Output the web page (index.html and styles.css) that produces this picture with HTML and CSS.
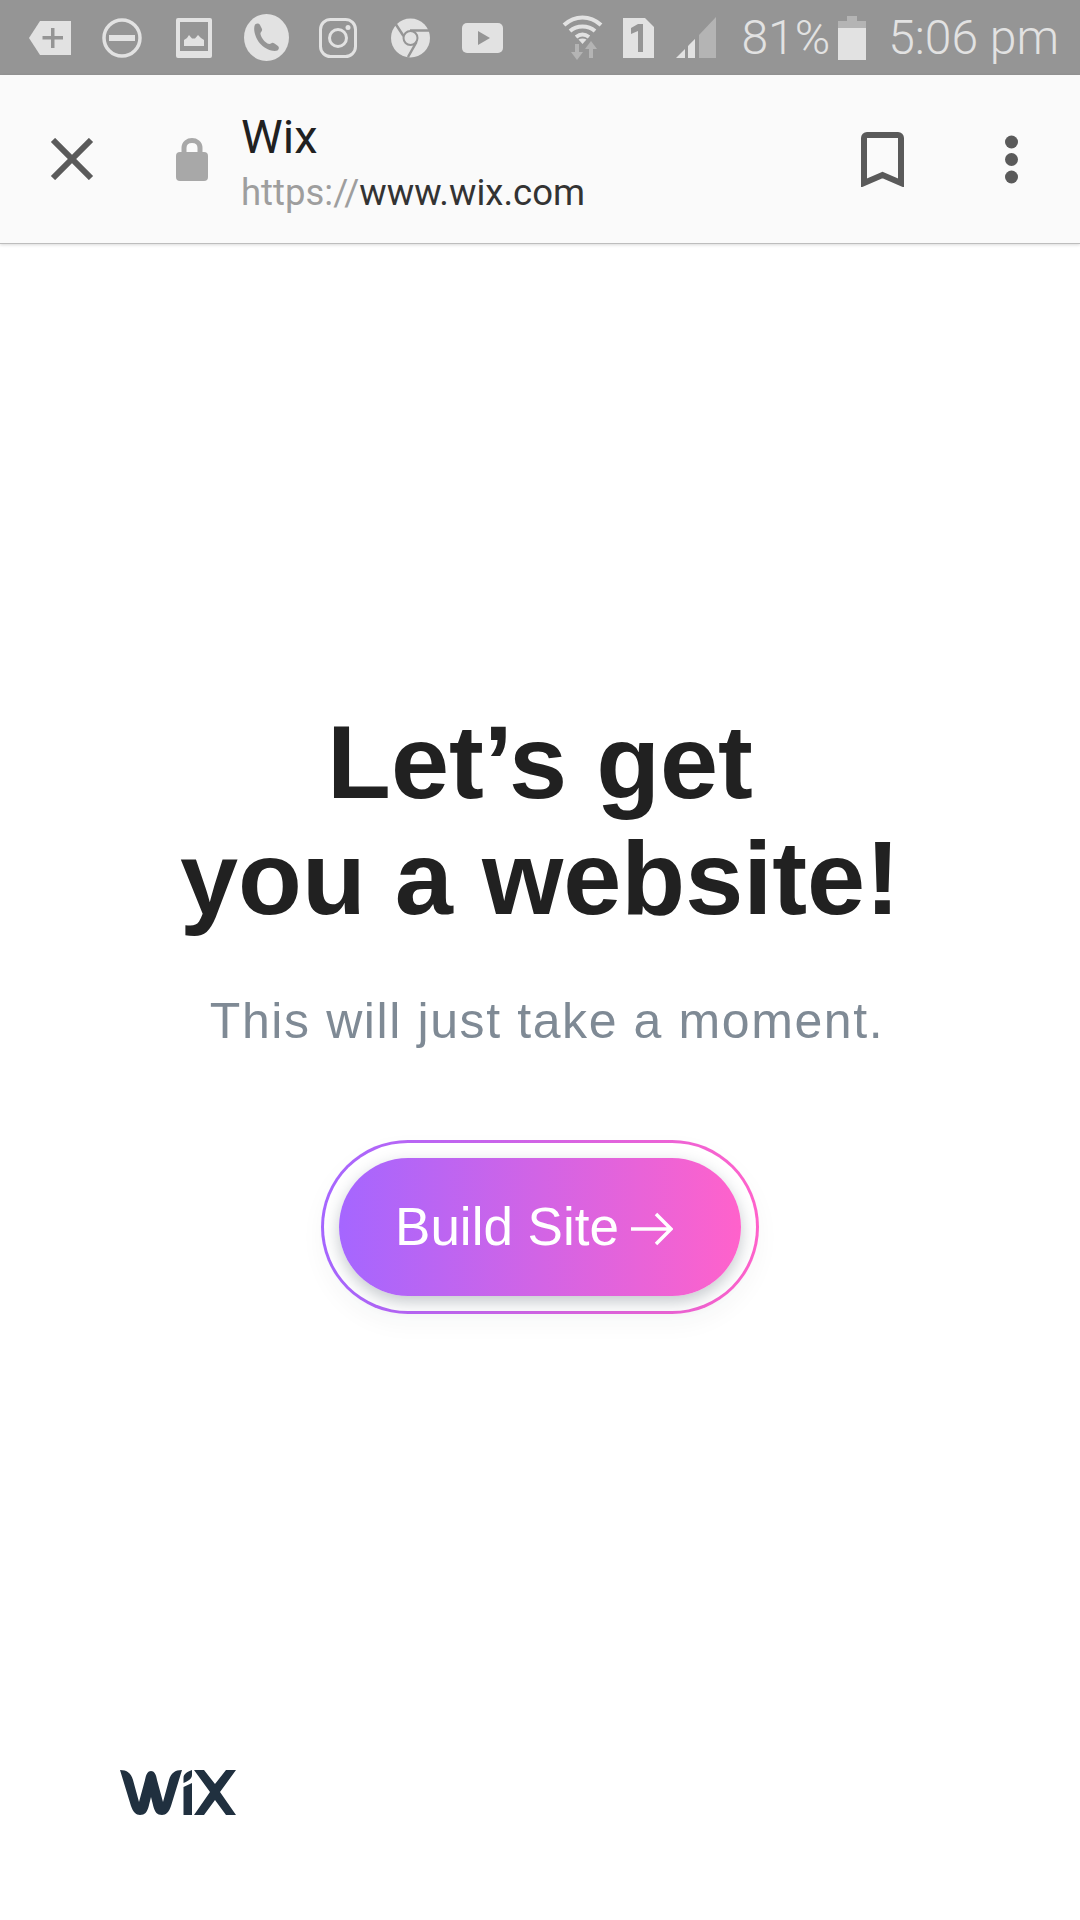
FILE: index.html
```html
<!DOCTYPE html>
<html lang="en">
<head>
  <meta charset="UTF-8" />
  <meta name="viewport" content="width=device-width, initial-scale=1.0"/>
  <title>Wix</title>
  <link rel="stylesheet" href="styles.css">
</head>
<body>

  <div class="status-bar">
    <div class="status-left">
      <span class="status-cell">
        <svg width="42" height="34" viewBox="0 0 42 34"><path class="ico" d="M11 0H42V34H11L0 17Z"/><path class="cut" d="M22 7h3.500v8h8.500v3.500h-8.500v8.500h-3.500v-8.500h-8.500v-3.500h8.500z"/></svg>
      </span>
      <span class="status-cell">
        <svg width="40" height="40" viewBox="0 0 40 40"><circle class="line" cx="20" cy="20" r="18" stroke-width="3.5"/><rect class="ico" x="7" y="17" width="26" height="6"/></svg>
      </span>
      <span class="status-cell">
        <svg width="36" height="40" viewBox="0 0 36 40"><path class="ico" fill-rule="evenodd" d="M2 0H34A2 2 0 0 1 36 2V38A2 2 0 0 1 34 40H2A2 2 0 0 1 0 38V2A2 2 0 0 1 2 0ZM4 4V33H32V4Z"/><path class="ico" d="M8 28V22L11 20L13 17L16 20.500L19 20.500L22 17L25 20L28 22V28Z"/></svg>
      </span>
      <span class="status-cell">
        <svg width="45" height="47" viewBox="0 0 45 47"><ellipse class="ico" cx="22.500" cy="23.500" rx="22.500" ry="23.500"/><path class="cut" d="M11 10.500C13 9 15 9 16 11L18 15C18.500 17 17 18 16.500 19C16 21 19 26 21.500 28C23.500 30 25.500 30.500 27 29.500C28 28.500 29 28.500 30.500 29.500L34 32C35.500 33.500 35 35 33.500 36.500C29 38 22 35.500 17 30.500C12 25.500 8.500 16 11 10.500Z"/></svg>
      </span>
      <span class="status-cell">
        <svg width="38" height="40" viewBox="0 0 38 40"><rect class="line" x="1.500" y="1.500" width="35" height="37" rx="10" stroke-width="3"/><circle class="line" cx="19" cy="20" r="8.500" stroke-width="3"/><circle class="ico" cx="29" cy="9.500" r="2.500"/></svg>
      </span>
      <span class="status-cell">
        <svg width="39" height="40" viewBox="0 0 39 40"><circle class="ico" cx="19.500" cy="20" r="19.500"/><circle class="ico" cx="19.500" cy="20" r="7" stroke="#959595" stroke-width="2"/><path class="gap" d="M19 12.500H38M12.500 18L4 5M25.500 24L17 39"/></svg>
      </span>
      <span class="status-cell">
        <svg width="41" height="30" viewBox="0 0 41 30"><rect class="ico" width="41" height="30" rx="5"/><path class="cut" d="M16 8L28 15L16 22Z"/></svg>
      </span>
    </div>

    <div class="status-right">
      <svg class="wifi" width="41" height="45" viewBox="0 0 41 45">
        <path class="arc" d="M2 10C13 0 28 0 39 10M8 16C15 10 26 10 33 16M14 22C18 19 23 19 27 22"/>
        <path class="ico" d="M20.500 29L16.500 24.500C19 23 22 23 24.500 24.500Z"/>
        <path class="dim" d="M23 34L29 26L35 34H31V43H27V34ZM13 37V29H17V37H21L15 45L9 37Z"/>
      </svg>
      <svg class="sim" width="31" height="40" viewBox="0 0 31 40"><path class="ico" d="M0 0H22L31 9V40H0Z"/><path class="cut" d="M8 10L15 6H20V34H15V13L8 16Z"/></svg>
      <svg class="signal" width="40" height="41" viewBox="0 0 40 41">
        <path class="dim" d="M40 0V41H23V18Z"/>
        <path class="dim" d="M19 22V41H13V28Z"/>
        <path class="ico" d="M19 22V41H12V29Z"/>
        <path class="ico" d="M9 32V41H0Z"/>
      </svg>
      <span class="status-text">81%</span>
      <svg class="battery" width="28" height="44" viewBox="0 0 28 44"><path class="dim" d="M9 0H19V5H28V12H0V5H9Z"/><rect class="ico" y="12" width="28" height="32"/></svg>
      <span class="status-text time">5:06 pm</span>
    </div>
  </div>

  <div class="toolbar">
    <svg class="close-icon" width="44" height="42" viewBox="0 0 44 42"><path d="M3 2L41 40M41 2L3 40"/></svg>
    <svg class="lock-icon" width="32" height="44" viewBox="0 0 32 44"><path class="lock-arc" d="M8 18V11C8 1 24 1 24 11V18"/><rect y="15" width="32" height="29" rx="4"/></svg>
    <div class="page-info">
      <div class="page-title">Wix</div>
      <div class="page-url"><span class="scheme">https://</span>www.wix.com</div>
    </div>
    <svg class="bookmark-icon" width="43" height="55" viewBox="0 0 43 55"><path d="M3 51V6A3 3 0 0 1 6 3H37A3 3 0 0 1 40 6V51L21.500 43Z"/></svg>
    <svg class="more-icon" width="15" height="49" viewBox="0 0 15 49"><circle cx="7.500" cy="7" r="6.500"/><circle cx="7.500" cy="24.500" r="6.500"/><circle cx="7.500" cy="42" r="6.500"/></svg>
  </div>

  <main class="intro">
    <h1>Let’s get<br>you a website!</h1>
    <p class="subtitle">This will just take a moment.</p>

    <div class="btn-ring">
      <button class="build-btn">Build Site
        <svg width="42" height="34" viewBox="0 0 42 34"><path d="M0 17H40M25 2L40 17L25 32"/></svg>
      </button>
    </div>

    <div class="logo-row">
      <svg width="116" height="47" viewBox="0 0 116 47" role="img" aria-label="Wix">
        <path d="M0 1C7 1 11 4 13 11L19 33L25 11C26 5 28 2 31 2C34 2 36 5 37 11L43 33L49 11C51 4 55 1 62 1L51 37C49 43 46 46 42 46C37 46 35 43 33.500 38L31 28L28.500 38C27 43 25 46 20 46C16 46 13 43 11 37Z"/>
        <path d="M63.500 9C63.500 5 67 3 72 1V6C72 10 68 12 63.500 14ZM63.500 18L72 14V46H63.500Z"/>
        <path d="M74 1H84L95 15L106 1H116L100 23L116 46H106L95 31L84 46H74L90 23Z"/>
      </svg>
    </div>
  </main>

</body>
</html>
```

FILE: styles.css
```css
* {
  box-sizing: border-box;
}

html, body {
  height: 100%;
}

body {
  margin: 0;
  display: flex;
  flex-direction: column;
  background-color: #fff;
  font-family: 'Liberation Sans', Arial, sans-serif;
  overflow: hidden;
}

/* status bar */
.status-bar {
  height: 75px;
  flex-shrink: 0;
  display: flex;
  justify-content: space-between;
  align-items: center;
  padding: 0 21px 0 14px;
  background-color: #959595;
}

.status-left, .status-right {
  display: flex;
  align-items: center;
}

.status-cell {
  width: 72px;
  display: flex;
  justify-content: center;
}

.status-bar svg {
  display: block;
}

.ico {
  fill: #e2e2e2;
}

.cut {
  fill: #959595;
}

.dim {
  fill: #b4b4b4;
}

.line {
  fill: none;
  stroke: #e2e2e2;
}

.gap {
  fill: none;
  stroke: #959595;
  stroke-width: 2.5;
}

.arc {
  fill: none;
  stroke: #e2e2e2;
  stroke-width: 4;
}

.sim {
  margin-left: 20px;
}

.signal {
  margin-left: 22px;
}

.battery {
  margin-left: 8px;
}

.status-text {
  margin-left: 25px;
  font-family: Roboto, sans-serif;
  font-weight: 300;
  font-size: 48px;
  line-height: 75px;
  color: #e2e2e2;
}

.status-text.time {
  margin-left: 22px;
}

/* toolbar */
.toolbar {
  height: 169px;
  flex-shrink: 0;
  display: flex;
  align-items: center;
  padding: 0 61px 0 50px;
  background-color: #fafafa;
  border-bottom: 1px solid #bdbdbd;
  box-shadow: 0 1px 3px rgba(0, 0, 0, 0.15);
  position: relative;
}

.close-icon path {
  fill: none;
  stroke: #5a5a5a;
  stroke-width: 6;
}

.lock-icon {
  margin-left: 82px;
  fill: #a8a8a8;
}

.lock-arc {
  fill: none;
  stroke: #a8a8a8;
  stroke-width: 5;
}

.page-info {
  margin-left: 33px;
  margin-top: 11px;
  font-family: Roboto, sans-serif;
}

.page-title {
  font-size: 47px;
  line-height: 51px;
  color: #212121;
}

.page-url {
  margin-top: 5px;
  font-size: 36.5px;
  line-height: 51px;
  color: #333;
}

.scheme {
  color: #9e9e9e;
}

.bookmark-icon {
  margin-left: auto;
  fill: none;
  stroke: #5a5a5a;
  stroke-width: 6;
}

.more-icon {
  margin-left: 100px;
  fill: #5a5a5a;
}

/* main content */
.intro {
  flex: 1;
  display: flex;
  flex-direction: column;
  align-items: center;
  padding-top: 460px;
  padding-bottom: 104px;
}

h1 {
  margin: 0;
  font-size: 104.500px;
  line-height: 116px;
  font-weight: bold;
  text-align: center;
  color: #212121;
}

.subtitle {
  margin: 55px 0 0 14px;
  font-size: 50px;
  line-height: 60px;
  letter-spacing: 1.6px;
  color: #7f8a95;
}

.btn-ring {
  margin-top: 89px;
  padding: 15px;
  border: 3px solid transparent;
  border-radius: 90px;
  background: linear-gradient(#fff, #fff) padding-box,
              linear-gradient(90deg, #a566ff, #ff62cb) border-box;
  box-shadow: 0 10px 24px rgba(32, 48, 63, 0.04);
}

.build-btn {
  width: 402px;
  height: 138px;
  display: flex;
  align-items: center;
  justify-content: center;
  gap: 12px;
  padding: 0 12px 2px 0;
  border: none;
  border-radius: 69px;
  background: linear-gradient(90deg, #a566ff, #ff62cb);
  box-shadow: 0 6px 16px rgba(32, 48, 63, 0.26);
  font-family: inherit;
  font-size: 53px;
  color: #fff;
  cursor: pointer;
}

.build-btn svg {
  margin-top: 6px;
  fill: none;
  stroke: #fff;
  stroke-width: 3.5;
}

.logo-row {
  margin-top: auto;
  align-self: flex-start;
  padding-left: 120px;
}

.logo-row svg {
  display: block;
  fill: #20303f;
}
```
